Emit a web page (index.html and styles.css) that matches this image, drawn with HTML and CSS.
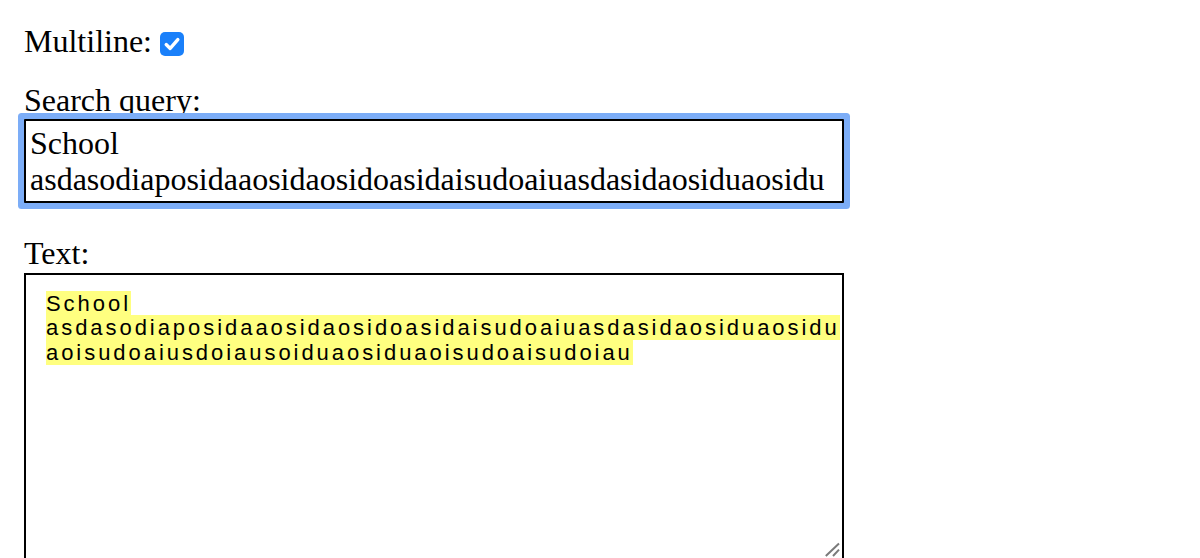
FILE: index.html
```html
<!DOCTYPE html>
<html lang="en">
<head>
<meta charset="utf-8">
<title>Search highlight</title>
<link rel="stylesheet" href="styles.css">
</head>
<body>
<main class="page">
  <div class="row">
    <label class="label" for="multi">Multiline:</label>
    <span class="checkbox" id="multi" role="checkbox" aria-checked="true"><svg width="24" height="24" viewBox="0 0 24 24"><rect x="0" y="0" width="24" height="24" rx="5" fill="#1a80fa"/><path d="M6.2 12.6 L10.2 16.4 L17.8 7.6" fill="none" stroke="#fff" stroke-width="3.4" stroke-linecap="round" stroke-linejoin="round"/></svg></span>
  </div>

  <label class="label label-query" for="query">Search query:</label>
  <textarea class="query" id="query" rows="2">School
asdasodiaposidaaosidaosidoasidaisudoaiuasdasidaosiduaosiduaoisudoaiusdoiausoiduaosiduaoisudoaisudoiau</textarea>

  <label class="label label-text">Text:</label>
  <div class="textbox">
    <div class="backdrop"><mark class="hl">School</mark>
<mark class="hl">asdasodiaposidaaosidaosidoasidaisudoaiuasdasidaosiduaosiduaoisudoaiusdoiausoiduaosiduaoisudoaisudoiau</mark></div>
    <svg class="grip" width="16" height="16" viewBox="0 0 16 16"><path d="M0.8 14 L14 1.6 M8 14 L14 7.6" stroke="#7a7a7a" stroke-width="2" fill="none"/></svg>
  </div>
</main>
</body>
</html>
```

FILE: styles.css
```css
html, body {
  margin: 0;
  padding: 0;
  background: #fff;
}

.page {
  display: flex;
  flex-direction: column;
  align-items: flex-start;
  padding: 23px 24px 0 24px;
  font-family: "Liberation Serif", "Times New Roman", serif;
  font-size: 32px;
  color: #000;
}

.row {
  line-height: normal;
  white-space: nowrap;
}

.label {
  line-height: normal;
}

.checkbox {
  display: inline-block;
  width: 24px;
  height: 24px;
  margin-left: 0;
  vertical-align: -4px;
}

.checkbox svg {
  display: block;
}

.label-query {
  margin-top: 22px;
}

.query {
  display: block;
  box-sizing: border-box;
  width: 820px;
  height: 84px;
  margin: 0;
  padding: 4px;
  border: 2px solid #000;
  border-radius: 1px;
  box-shadow: 0 0 0 6px #7cadf7;
  outline: none;
  resize: none;
  overflow: hidden;
  font-family: "Liberation Serif", "Times New Roman", serif;
  font-size: 32px;
  line-height: 36px;
  color: #000;
  background: #fff;
}

.label-text {
  margin-top: 31.5px;
}

.textbox {
  position: relative;
  box-sizing: border-box;
  width: 820px;
  height: 288px;
  margin-top: 1px;
  border: 2px solid #000;
  padding: 17px 0 0 20px;
  background: #fff;
}

.backdrop {
  font-family: "Liberation Sans", Arial, sans-serif;
  font-size: 22px;
  line-height: 24.5px;
  letter-spacing: 2.95px;
  color: #000;
  white-space: pre-wrap;
  overflow-wrap: anywhere;
}

.hl {
  background: #ffff80;
  color: #000;
}

.grip {
  position: absolute;
  right: 1px;
  bottom: 1px;
}
```
